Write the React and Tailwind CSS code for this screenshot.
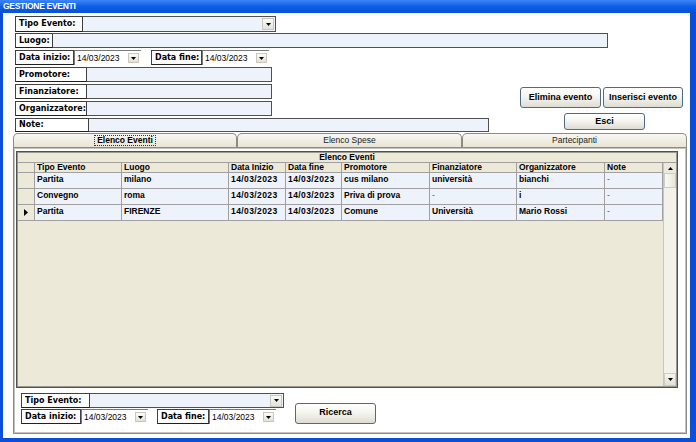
import React from "react";

const Arrow = () => (
  <svg width="5" height="3" viewBox="0 0 5 3"><path d="M0 0H5L2.5 3Z" fill="#000" /></svg>
);

const DropBtn = ({ cls }) => (
  <div className={`flex items-center justify-center bg-gradient-to-b from-[#fbfbf8] to-[#e2e1da] border border-[#c9c7ba] ${cls}`}>
    <Arrow />
  </div>
);

const Label = ({ w, children }) => (
  <div className={`${w} h-full shrink-0 flex items-center border border-[#404040] border-b-[#202020] bg-white pl-[3px] font-['DejaVu_Sans',sans-serif] font-bold text-[8px] leading-none text-black whitespace-nowrap`}>
    {children}
  </div>
);

const Input = ({ w }) => (
  <div className={`${w} h-full border border-[#505050] border-l-0 bg-[#eef2fa]`} />
);

const Combo = ({ w }) => (
  <div className={`${w} h-full border border-[#505050] border-l-0 bg-[#eef2fa] flex justify-end items-center pr-[1px]`}>
    <DropBtn cls="w-[12px] h-[12px]" />
  </div>
);

const DateBox = ({ w }) => (
  <div className={`${w} h-full border-t border-l border-[#7a7a7a] bg-white flex items-center justify-between pl-[2px] pr-[2px] font-['Liberation_Sans',sans-serif] text-[8.5px] text-black`}>
    <span>14/03/2023</span>
    <DropBtn cls="w-[11px] h-[10px]" />
  </div>
);

const Btn = ({ w, h, children }) => (
  <div className={`${w} ${h} shrink-0 rounded-[3px] border border-[#4f6a86] bg-gradient-to-b from-white via-[#f3f3ee] to-[#dedcd2] flex items-center justify-center font-['Liberation_Sans',sans-serif] font-bold text-[9px] text-black`}>
    {children}
  </div>
);

const cols = [
  { w: "w-[87px]", t: "Tipo Evento" },
  { w: "w-[107px]", t: "Luogo" },
  { w: "w-[57px]", t: "Data Inizio" },
  { w: "w-[56px]", t: "Data fine" },
  { w: "w-[88px]", t: "Promotore" },
  { w: "w-[87px]", t: "Finanziatore" },
  { w: "w-[88px]", t: "Organizzatore" },
  { w: "w-[58px]", t: "Note" },
];

const rows = [
  ["Partita", "milano", "14/03/2023", "14/03/2023", "cus milano", "università", "bianchi", "-"],
  ["Convegno", "roma", "14/03/2023", "14/03/2023", "Priva di prova", "-", "i", "-"],
  ["Partita", "FIRENZE", "14/03/2023", "14/03/2023", "Comune", "Università", "Mario Rossi", "-"],
];

export default function App() {
  return (
    <div className="w-[696px] h-[442px] bg-[#0b4fd8] flex flex-col overflow-hidden">
      <div className="h-[13px] shrink-0 bg-gradient-to-b from-[#3b86f7] via-[#0d5ee6] to-[#0552d6] pl-[3px] flex items-center font-['Liberation_Sans',sans-serif] font-bold text-[8.5px] tracking-[-0.3px] text-white">
        GESTIONE EVENTI
      </div>
      <div className="flex-1 ml-[3px] mr-[6px] mb-[4px] bg-white flex flex-col pt-[3px]">
        {/* form */}
        <div className="pl-[12px] flex flex-col">
          <div className="h-[16px] flex">
            <Label w="w-[68px]">Tipo Evento:</Label>
            <Combo w="w-[193px]" />
          </div>
          <div className="h-[15px] flex mt-[1px]">
            <Label w="w-[38px]">Luogo:</Label>
            <Input w="w-[555px]" />
          </div>
          <div className="h-[15px] flex mt-[2px] items-stretch">
            <Label w="w-[59px]">Data inizio:</Label>
            <DateBox w="w-[67px]" />
            <div className="w-[10px]" />
            <Label w="w-[51px]">Data fine:</Label>
            <DateBox w="w-[67px]" />
          </div>
          <div className="flex">
            <div className="flex flex-col">
              <div className="h-[15px] flex mt-[2px]">
                <Label w="w-[72px]">Promotore:</Label>
                <Input w="w-[185px]" />
              </div>
              <div className="h-[15px] flex mt-[2px]">
                <Label w="w-[72px]">Finanziatore:</Label>
                <Input w="w-[185px]" />
              </div>
              <div className="h-[15px] flex mt-[2px]">
                <Label w="w-[72px]">Organizzatore:</Label>
                <Input w="w-[185px]" />
              </div>
              <div className="h-[14px] flex mt-[2px]">
                <Label w="w-[74px]">Note:</Label>
                <Input w="w-[400px]" />
              </div>
            </div>
            <div className="flex flex-col ml-[31px] pt-[22px]">
              <div className="flex gap-[2px]">
                <Btn w="w-[81px]" h="h-[21px]">Elimina evento</Btn>
                <Btn w="w-[80px]" h="h-[21px]">Inserisci evento</Btn>
              </div>
              <div className="ml-[44px] mt-[5px]">
                <Btn w="w-[81px]" h="h-[17px]">Esci</Btn>
              </div>
            </div>
          </div>
        </div>

        {/* tabs */}
        <div className="ml-[10px] w-[674px] h-[14px] flex font-['Liberation_Sans',sans-serif] text-[8.5px] text-black mt-[1px]">
          <div className="w-[224px] h-full rounded-t-[5px] border border-b-0 border-[#8c8c80] bg-gradient-to-b from-[#f8f7f2] to-[#e8e5d6] flex items-center justify-center">
            <span className="border border-dotted border-[#333] px-[2px] leading-[9px] font-bold text-[8.5px]">Elenco Eventi</span>
          </div>
          <div className="w-[225px] h-full rounded-t-[5px] border border-b-0 border-[#8c8c80] bg-gradient-to-b from-[#f8f7f2] to-[#e8e5d6] flex items-center justify-center text-[#222]">
            Elenco Spese
          </div>
          <div className="w-[225px] h-full rounded-t-[5px] border border-b-0 border-[#8c8c80] bg-gradient-to-b from-[#f8f7f2] to-[#e8e5d6] flex items-center justify-center text-[#222]">
            Partecipanti
          </div>
        </div>

        {/* panel */}
        <div className="ml-[10px] w-[674px] h-[287px] border border-[#8a8a8a] bg-white">
          <div className="w-full h-full border border-[#c4c4bc] flex flex-col">
            {/* grid */}
            <div className="mt-[2px] ml-[1px] w-[662px] h-[237px] border border-[#505050] flex flex-col bg-[#ece9d8]">
              <div className="border border-[#9a9a90] flex-1 flex flex-col">
                <div className="h-[10px] flex items-center justify-center border-b border-[#a0a0a0] font-['Liberation_Sans',sans-serif] font-bold text-[8.5px] leading-none text-black">
                  Elenco Eventi
                </div>
                <div className="flex-1 flex">
                  <div className="flex-1 flex flex-col">
                    {/* header */}
                    <div className="h-[10px] flex border-b border-[#a0a0a0] font-['Liberation_Sans',sans-serif] font-bold text-[8.5px] leading-none text-black">
                      <div className="w-[17px] border-r border-[#a0a0a0]" />
                      {cols.map((c, i) => (
                        <div key={i} className={`${c.w} border-r border-[#a0a0a0] pl-[2px] flex items-center overflow-hidden whitespace-nowrap`}>
                          {c.t}
                        </div>
                      ))}
                    </div>
                    {rows.map((r, ri) => (
                      <div key={ri} className="h-[16px] flex border-b border-[#a0a0a0] font-['Liberation_Sans',sans-serif] font-bold text-[8.5px] leading-none text-black">
                        <div className="w-[17px] border-r border-[#a0a0a0] bg-[#ece9d8] flex items-center justify-center">
                          {ri === 2 && (
                            <svg width="4" height="7" viewBox="0 0 4 7"><path d="M0 0L4 3.5L0 7Z" fill="#000" /></svg>
                          )}
                        </div>
                        {r.map((v, ci) => (
                          <div key={ci} className={`${cols[ci].w} border-r border-[#a0a0a0] bg-[#eef2fa] pl-[2px] pt-[2px] overflow-hidden whitespace-nowrap ${v === "-" ? "font-normal text-[#555]" : ""} ${ci === 2 || ci === 3 ? "tracking-[0.4px]" : ""}`}>
                            {v}
                          </div>
                        ))}
                      </div>
                    ))}
                  </div>
                  {/* scrollbar */}
                  <div className="w-[14px] flex flex-col bg-[#f1efe6] border-l border-[#c8c6bb]">
                    <div className="h-[10px] flex items-center justify-center bg-[#ece9d8]">
                      <svg width="5" height="3" viewBox="0 0 5 3"><path d="M0 3H5L2.5 0Z" fill="#000" /></svg>
                    </div>
                    <div className="h-[15px] bg-gradient-to-r from-[#fafaf7] to-[#e8e6dc] border border-[#d0cec3]" />
                    <div className="flex-1 bg-[#f3f1ea]" />
                    <div className="h-[13px] flex items-center justify-center bg-gradient-to-b from-[#f6f5f0] to-[#e2e0d6] border border-[#cfcdc2]">
                      <Arrow />
                    </div>
                  </div>
                </div>
              </div>
            </div>

            {/* filters */}
            <div className="flex items-center mt-[5px] ml-[6px]">
              <div className="flex flex-col">
                <div className="h-[15px] flex">
                  <Label w="w-[69px]">Tipo Evento:</Label>
                  <Combo w="w-[194px]" />
                </div>
                <div className="h-[15px] flex mt-[1px]">
                  <Label w="w-[60px]">Data inizio:</Label>
                  <DateBox w="w-[67px]" />
                  <div className="w-[9px]" />
                  <Label w="w-[52px]">Data fine:</Label>
                  <DateBox w="w-[67px]" />
                </div>
              </div>
              <div className="ml-[11px] mt-[9px]">
                <Btn w="w-[81px]" h="h-[21px]">Ricerca</Btn>
              </div>
            </div>
          </div>
        </div>
      </div>
    </div>
  );
}
